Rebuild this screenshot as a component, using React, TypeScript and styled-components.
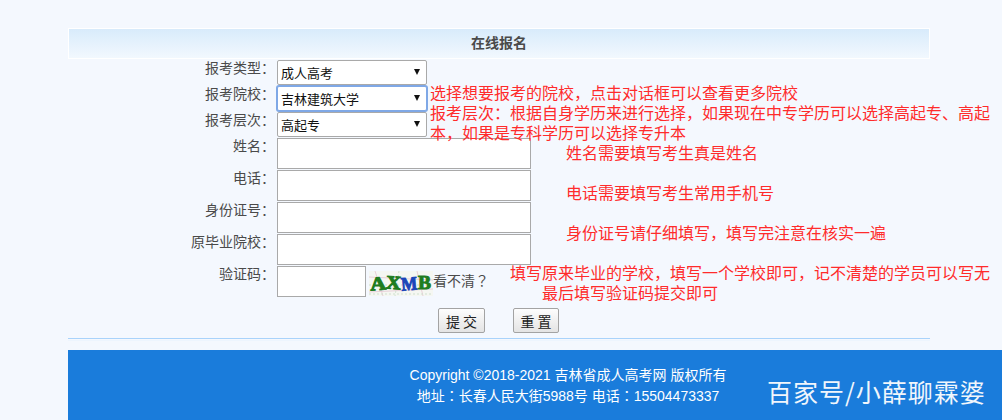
import React from "react";
import styled, { createGlobalStyle } from "styled-components";

const CJK = `"Noto Sans CJK SC", "Liberation Sans", sans-serif`;

const GlobalStyle = createGlobalStyle`
    html, body {
        margin: 0;
        padding: 0;
        background: #f4f8fe;
        font-family: ${CJK};
    }
`;

const Page = styled.div`
    position: relative;
    width: 1002px;
    height: 420px;
    overflow: hidden;
    padding-top: 28px;
    box-sizing: border-box;
    background: #f4f8fe;
`;

const Panel = styled.div`
    margin-left: 68px;
    width: 862px;
`;

const TitleBar = styled.h2`
    box-sizing: border-box;
    height: 31px;
    margin: 0;
    border: 1px solid #fff;
    background: linear-gradient(#d8ebfb, #f2f8fe);
    color: #4a4a4a;
    font-size: 14px;
    font-weight: 700;
    line-height: 27px;
    text-align: center;
`;

const Form = styled.form`
    display: flex;
    flex-direction: column;
    padding-top: 1px;
`;

const Row = styled.div<{ $height: number }>`
    display: flex;
    height: ${({ $height }) => $height}px;
`;

const Label = styled.label`
    flex: 0 0 209px;
    box-sizing: border-box;
    padding-right: 2px;
    color: #4a4a4a;
    font-size: 14px;
    line-height: 14px;
    text-align: right;
`;

const SelectWrap = styled.div`
    position: relative;
    width: 150px;
    height: 25px;

    &::after {
        content: "";
        position: absolute;
        top: 9px;
        right: 7px;
        border-left: 3.5px solid transparent;
        border-right: 3.5px solid transparent;
        border-top: 6px solid #111;
        pointer-events: none;
    }
`;

const Select = styled.select<{ $focused?: boolean }>`
    appearance: none;
    box-sizing: border-box;
    display: block;
    width: 100%;
    height: 100%;
    padding: 0 0 0 3px;
    border: 1px solid ${({ $focused }) => ($focused ? "#7fa8e6" : "#a9a9a9")};
    border-radius: 2px;
    box-shadow: ${({ $focused }) => ($focused ? "0 0 0 1px #7fa8e6" : "none")};
    background: #fff;
    color: #111;
    font-family: ${CJK};
    font-size: 13px;
    outline: none;
`;

const TextInput = styled.input<{ $width: number }>`
    box-sizing: border-box;
    width: ${({ $width }) => $width}px;
    height: 31px;
    margin: 0;
    padding: 0 4px;
    border: 1px solid #a9a9a9;
    background: #fff;
    outline: none;
`;

const Captcha = styled.svg`
    display: block;
    margin: 5px 0 0 3px;
    background: #f5f7f2;
`;

const CaptchaHint = styled.span`
    color: #4a4a4a;
    font-size: 14px;
    line-height: 16px;
    margin-top: 6px;
`;

const Actions = styled.div`
    display: flex;
    gap: 28px;
    padding: 10px 0 0 370px;
`;

const Button = styled.button<{ $width: number }>`
    box-sizing: border-box;
    width: ${({ $width }) => $width}px;
    height: 25px;
    padding: 0 0 0 3px;
    border: 1px solid #a3a3a3;
    border-radius: 2px;
    background: linear-gradient(#fdfdfd, #e4e4e4);
    color: #222;
    font-family: ${CJK};
    font-size: 14px;
    letter-spacing: 3px;
`;

const Divider = styled.div`
    height: 1px;
    margin-top: 5px;
    background: #a9d3fb;
    box-shadow: 0 2px 0 #edf5fe;
`;

const Footer = styled.footer`
    margin: 11px 0 0 68px;
    height: 70px;
    padding-top: 15px;
    box-sizing: border-box;
    background: #1a7cdb;
    color: #fff;
    font-size: 14px;
    line-height: 20px;
`;

const FooterBlock = styled.div`
    width: 318px;
    margin-left: 341px;
    font-family: "Liberation Sans", ${CJK};
    white-space: nowrap;
    text-align: center;
`;

// the TC face centres full-width punctuation, as the reference does
const Punct = styled.span`
    font-family: "Noto Sans CJK TC", sans-serif;
`;

const Watermark = styled.div`
    position: absolute;
    left: 767px;
    top: 376px;
    color: #f1f6fc;
    font-size: 25px;
    letter-spacing: 1px;
    line-height: 30px;
    white-space: nowrap;
`;

const Note = styled.div<{ $left: number; $top: number; $width?: number }>`
    position: absolute;
    left: ${({ $left }) => $left}px;
    top: ${({ $top }) => $top}px;
    width: ${({ $width }) => ($width ? `${$width}px` : "auto")};
    white-space: ${({ $width }) => ($width ? "normal" : "nowrap")};
    color: #ff2b2b;
    font-size: 16px;
    line-height: 20px;
`;

const selects = [
    { label: "报考类型：", value: "成人高考" },
    { label: "报考院校：", value: "吉林建筑大学", focused: true },
    { label: "报考层次：", value: "高起专" },
];

const inputs = ["姓名：", "电话：", "身份证号：", "原毕业院校："];

const notes = [
    { left: 430, top: 82, text: "选择想要报考的院校，点击对话框可以查看更多院校" },
    { left: 430, top: 102, width: 568, text: "报考层次：根据自身学历来进行选择，如果现在中专学历可以选择高起专、高起本，如果是专科学历可以选择专升本" },
    { left: 566, top: 142, text: "姓名需要填写考生真是姓名" },
    { left: 566, top: 182, text: "电话需要填写考生常用手机号" },
    { left: 566, top: 222, text: "身份证号请仔细填写，填写完注意在核实一遍" },
    { left: 510, top: 262, text: "填写原来毕业的学校，填写一个学校即可，记不清楚的学员可以写无" },
    { left: 542, top: 282, text: "最后填写验证码提交即可" },
];

const CaptchaImage = () => (
    <Captcha width={64} height={25} viewBox="0 0 64 25">
        <path d="M0 21 L64 18 M0 6 L64 9 M6 0 L14 25 M48 0 L54 25" stroke="#e8cfd8" strokeWidth="1" fill="none" />
        <path d="M0 23 L64 23 M30 0 L26 25 M0 14 L64 14" stroke="#cfe0cf" strokeWidth="1" strokeDasharray="2 2" fill="none" />
        <g fontFamily="'Liberation Serif', serif" fontWeight="700" fontSize="19" strokeWidth="1">
            <text x="1" y="19" fill="#1f7d1f" stroke="#1f7d1f" textLength={16} lengthAdjust="spacingAndGlyphs" transform="rotate(-4 9 12)">A</text>
            <text x="17" y="18" fill="#1f7d1f" stroke="#1f7d1f" textLength={15} lengthAdjust="spacingAndGlyphs" transform="rotate(5 24 12)">X</text>
            <text x="32" y="19" fill="#1b45b8" stroke="#1b45b8" textLength={16} lengthAdjust="spacingAndGlyphs" transform="rotate(-5 40 12)">M</text>
            <text x="49" y="18" fill="#1f7d1f" stroke="#1f7d1f" textLength={13} lengthAdjust="spacingAndGlyphs">B</text>
        </g>
    </Captcha>
);

const App = () => {
    return (
        <Page>
            <GlobalStyle />
            <Panel>
                <TitleBar>在线报名</TitleBar>
                <Form>
                    {selects.map((item) => (
                        <Row key={item.label} $height={26}>
                            <Label>{item.label}</Label>
                            <SelectWrap>
                                <Select $focused={item.focused} defaultValue={item.value}>
                                    <option>{item.value}</option>
                                </Select>
                            </SelectWrap>
                        </Row>
                    ))}
                    {inputs.map((label) => (
                        <Row key={label} $height={32}>
                            <Label>{label}</Label>
                            <TextInput $width={254} />
                        </Row>
                    ))}
                    <Row $height={32}>
                        <Label>验证码：</Label>
                        <TextInput $width={89} />
                        <CaptchaImage />
                        <CaptchaHint>看不清<Punct>？</Punct></CaptchaHint>
                    </Row>
                    <Actions>
                        <Button type="button" $width={47}>提交</Button>
                        <Button type="button" $width={46}>重置</Button>
                    </Actions>
                </Form>
                <Divider />
            </Panel>
            <Footer>
                <FooterBlock>
                    <div>Copyright ©2018-2021 吉林省成人高考网 版权所有</div>
                    <div>地址<Punct>：</Punct>长春人民大街5988号 电话<Punct>：</Punct>15504473337</div>
                </FooterBlock>
            </Footer>
            <Watermark>百家号/小薛聊霖婆</Watermark>
            {notes.map((note) => (
                <Note key={note.text} $left={note.left} $top={note.top} $width={note.width}>
                    {note.text}
                </Note>
            ))}
        </Page>
    );
};

export default App;
